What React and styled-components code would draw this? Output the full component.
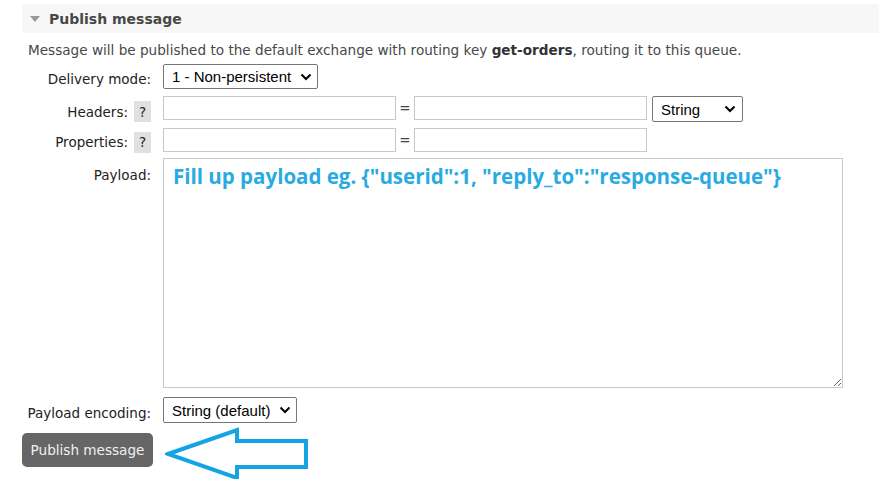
import React from "react";
import styled, { createGlobalStyle } from "styled-components";

const GlobalStyle = createGlobalStyle`
    html, body {
        margin: 0;
        padding: 0;
        background: #fff;
    }
    body {
        font-family: "DejaVu Sans", Verdana, sans-serif;
        color: #484848;
    }
`;

const Page = styled.div`
    padding: 4px 0 0 22px;
    width: 857px;
`;

const SectionHeader = styled.div`
    display: flex;
    align-items: center;
    height: 29px;
    background-color: #f7f7f7;
    padding-left: 8px;
    gap: 9px;
`;

const Triangle = styled.span`
    width: 0;
    height: 0;
    border-left: 5px solid transparent;
    border-right: 5px solid transparent;
    border-top: 6px solid #999;
    margin-top: 1px;
`;

const SectionTitle = styled.h2`
    margin: 0;
    font-size: 14px;
    font-weight: bold;
    color: #484848;
`;

const Body = styled.div`
    padding: 9px 0 0 6px;
`;

const Hint = styled.p`
    margin: 0 0 6px 0;
    font-size: 13.6px;
    line-height: 16px;
    color: #484848;
    b {
        color: #333;
    }
`;

const Form = styled.div`
    display: grid;
    grid-template-columns: 123px auto;
    column-gap: 12px;
    align-items: start;
`;

const Label = styled.label`
    box-sizing: border-box;
    display: flex;
    justify-content: flex-end;
    align-items: ${(p) => p.$align || "flex-end"};
    gap: 6px;
    height: ${(p) => p.$h}px;
    padding-top: ${(p) => p.$top || 0}px;
    padding-bottom: ${(p) => p.$bottom || 0}px;
    margin-bottom: ${(p) => p.$mb || 0}px;
    font-size: 13.5px;
    line-height: 16px;
    color: #222;
    white-space: nowrap;
`;

const Help = styled.span`
    flex-shrink: 0;
    display: inline-flex;
    align-items: center;
    justify-content: center;
    width: 17px;
    height: 21px;
    background: #e0e0e0;
    font-size: 13.5px;
    color: #222;
`;

const Controls = styled.div`
    display: flex;
    align-items: flex-start;
    margin-bottom: ${(p) => p.$mb || 0}px;
`;

const SelectWrap = styled.div`
    position: relative;
    margin-left: ${(p) => p.$ml || 0}px;
    svg {
        position: absolute;
        right: ${(p) => p.$chev || 6}px;
        top: 50%;
        transform: translateY(-50%);
        pointer-events: none;
    }
`;

const Select = styled.select`
    appearance: none;
    box-sizing: border-box;
    display: block;
    font-family: "Liberation Sans", Arial, sans-serif;
    font-size: 15px;
    color: #000;
    height: ${(p) => p.$h || 25}px;
    width: ${(p) => p.$w}px;
    border: 1px solid #767676;
    border-radius: 2px;
    background: #fff;
    padding: 0 0 0 8px;
    outline: none;
`;

const Chevron = () => (
    <svg width="12" height="8" viewBox="0 0 12 8">
        <polyline points="1.5,1.5 6,6 10.5,1.5" fill="none" stroke="#000" strokeWidth="2" />
    </svg>
);

const Dropdown = ({ w, h, ml, chev, children }) => (
    <SelectWrap $ml={ml} $chev={chev}>
        <Select $w={w} $h={h}>{children}</Select>
        <Chevron />
    </SelectWrap>
);

const TextInput = styled.input`
    box-sizing: border-box;
    width: 233px;
    height: 24px;
    border: 1px solid #c8c8c8;
    padding: 2px 4px;
    font-size: 13px;
    outline: none;
`;

const Equals = styled.span`
    width: 18px;
    text-align: center;
    font-size: 13.5px;
    line-height: 24px;
    color: #444;
`;

const Payload = styled.textarea`
    box-sizing: border-box;
    display: block;
    width: 680px;
    height: 230px;
    border: 1px solid #c8c8c8;
    padding: 3px 9px;
    margin-bottom: 9px;
    font-family: "Open Sans", "Noto Sans", sans-serif;
    font-weight: bold;
    font-size: 20.5px;
    line-height: 28px;
    color: #29abe2;
    resize: both;
    outline: none;
`;

const ButtonRow = styled.div`
    display: flex;
    align-items: flex-start;
    gap: 12px;
    margin: 10px 0 0 -6px;
    svg {
        margin-top: -7px;
    }
`;

const Button = styled.button`
    width: 131px;
    height: 34px;
    border: none;
    border-radius: 5px;
    background-color: #666;
    color: #f0f0f0;
    font-family: "DejaVu Sans", Verdana, sans-serif;
    font-size: 13.6px;
    padding: 0;
`;

const Arrow = () => (
    <svg width="146" height="56" viewBox="0 0 146 56">
        <polygon
            points="3,28 72,4 72,15 141,15 141,41 72,41 72,52"
            fill="none"
            stroke="#14a3e3"
            strokeWidth="4"
            strokeLinejoin="miter"
        />
    </svg>
);

export default function App() {
    return (
        <Page>
            <GlobalStyle />
            {/* ヘッダー */}
            <SectionHeader>
                <Triangle />
                <SectionTitle>Publish message</SectionTitle>
            </SectionHeader>

            <Body>
                <Hint>
                    Message will be published to the default exchange with routing key{" "}
                    <b>get-orders</b>, routing it to this queue.
                </Hint>

                <Form>
                    <Label $h={25} $bottom={2} $mb={7}>Delivery mode:</Label>
                    <Controls $mb={7}>
                        <Dropdown w={155} h={25} chev={6}>
                            <option>1 - Non-persistent</option>
                            <option>2 - Persistent</option>
                        </Dropdown>
                    </Controls>

                    <Label $h={26} $top={5} $align="center" $mb={6}>
                        Headers: <Help>?</Help>
                    </Label>
                    <Controls $mb={6}>
                        <TextInput />
                        <Equals>=</Equals>
                        <TextInput />
                        <Dropdown w={91} h={26} ml={5} chev={7}>
                            <option>String</option>
                            <option>Number</option>
                            <option>Boolean</option>
                        </Dropdown>
                    </Controls>

                    <Label $h={24} $top={4} $align="center" $mb={6}>
                        Properties: <Help>?</Help>
                    </Label>
                    <Controls $mb={6}>
                        <TextInput />
                        <Equals>=</Equals>
                        <TextInput />
                    </Controls>

                    <Label $h={230} $top={9} $align="flex-start">Payload:</Label>
                    <Payload defaultValue={'Fill up payload eg. {"userid":1, "reply_to":"response-queue"}'} />

                    <Label $h={26} $bottom={2}>Payload encoding:</Label>
                    <Controls>
                        <Dropdown w={134} h={26} chev={6}>
                            <option>String (default)</option>
                            <option>Base64</option>
                        </Dropdown>
                    </Controls>
                </Form>

                <ButtonRow>
                    <Button>Publish message</Button>
                    <Arrow />
                </ButtonRow>
            </Body>
        </Page>
    );
}
